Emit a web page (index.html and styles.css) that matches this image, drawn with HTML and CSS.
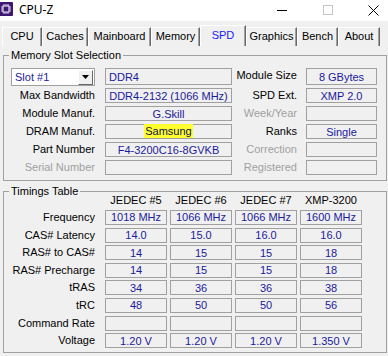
FILE: index.html
```html
<!DOCTYPE html>
<html lang="en">
<head>
    <meta charset="UTF-8">
    <meta name="viewport" content="width=device-width, initial-scale=1.0">
    <title>CPU-Z</title>
    <link rel="stylesheet" href="styles.css">
</head>
<body>
    <div class="titlebar">
        <svg class="app-icon" viewBox="0 0 14 14">
            <rect x="0" y="0" width="14" height="14" rx="1" fill="#3d1673"/>
            <rect x="4" y="4" width="6" height="6" fill="none" stroke="#fff" stroke-width="1"/>
            <path d="M5 2v2M7 2v2M9 2v2M5 10v2M7 10v2M9 10v2M2 5h2M2 7h2M2 9h2M10 5h2M10 7h2M10 9h2" stroke="#d8c8f0" stroke-width="1"/>
        </svg>
        <span class="title">CPU-Z</span>
        <div class="controls">
            <div class="ctl">
                <svg width="10" height="10" viewBox="0 0 10 10"><path d="M0 5.5h10" stroke="#000" stroke-width="1"/></svg>
            </div>
            <div class="ctl">
                <svg width="10" height="10" viewBox="0 0 10 10"><rect x="0.5" y="0.5" width="9" height="9" fill="none" stroke="#c4c4c4" stroke-width="1"/></svg>
            </div>
            <div class="ctl">
                <svg width="11" height="11" viewBox="0 0 11 11"><path d="M0.5 0.5l10 10M10.5 0.5l-10 10" stroke="#000" stroke-width="1"/></svg>
            </div>
        </div>
    </div>

    <div class="tabs">
        <div class="tab">CPU</div>
        <div class="tab">Caches</div>
        <div class="tab">Mainboard</div>
        <div class="tab">Memory</div>
        <div class="tab active">SPD</div>
        <div class="tab">Graphics</div>
        <div class="tab">Bench</div>
        <div class="tab">About</div>
    </div>

    <div class="panel">
        <fieldset class="group slot-group">
            <legend>Memory Slot Selection</legend>
            <div class="slot-grid">
                <div class="dropdown">
                    <span>Slot #1</span>
                    <span class="drop-btn">
                        <svg width="7" height="4" viewBox="0 0 7 4"><path d="M0 0h7L3.5 4z" fill="#000"/></svg>
                    </span>
                </div>
                <div class="box left">DDR4</div>
                <div class="label right">Module Size</div>
                <div class="box">8 GBytes</div>

                <div class="label">Max Bandwidth</div>
                <div class="box">DDR4-2132 (1066 MHz)</div>
                <div class="label right">SPD Ext.</div>
                <div class="box">XMP 2.0</div>

                <div class="label">Module Manuf.</div>
                <div class="box">G.Skill</div>
                <div class="label right off">Week/Year</div>
                <div class="box"></div>

                <div class="label">DRAM Manuf.</div>
                <div class="box"><span class="mark">Samsung</span></div>
                <div class="label right">Ranks</div>
                <div class="box">Single</div>

                <div class="label">Part Number</div>
                <div class="box">F4-3200C16-8GVKB</div>
                <div class="label right off">Correction</div>
                <div class="box"></div>

                <div class="label off">Serial Number</div>
                <div class="box"></div>
                <div class="label right off">Registered</div>
                <div class="box"></div>
            </div>
        </fieldset>

        <fieldset class="group timing-group">
            <legend>Timings Table</legend>
            <div class="timing-grid" id="timingGrid"></div>
        </fieldset>
    </div>

    <script>
        const headers = ['JEDEC #5', 'JEDEC #6', 'JEDEC #7', 'XMP-3200'];
        const rows = [
            ['Frequency', '1018 MHz', '1066 MHz', '1066 MHz', '1600 MHz'],
            ['CAS# Latency', '14.0', '15.0', '16.0', '16.0'],
            ['RAS# to CAS#', '14', '15', '15', '18'],
            ['RAS# Precharge', '14', '15', '15', '18'],
            ['tRAS', '34', '36', '36', '38'],
            ['tRC', '48', '50', '50', '56'],
            ['Command Rate', '', '', '', ''],
            ['Voltage', '1.20 V', '1.20 V', '1.20 V', '1.350 V']
        ];

        const grid = document.getElementById('timingGrid');

        function addCell(text, cls) {
            const cell = document.createElement('div');
            cell.className = cls;
            cell.textContent = text;
            grid.appendChild(cell);
        }

        addCell('', 'th');
        headers.forEach(h => addCell(h, 'th'));

        rows.forEach(row => {
            addCell(row[0], 'label');
            row.slice(1).forEach(v => addCell(v, 'box'));
        });
    </script>
</body>
</html>
```

FILE: styles.css
```css
* {
    box-sizing: border-box;
}

body {
    margin: 0;
    width: 388px;
    height: 356px;
    overflow: hidden;
    background-color: #f0f0f0;
    font-family: 'Liberation Sans', Arial, sans-serif;
    font-size: 11px;
    color: #000;
}

.titlebar {
    display: flex;
    align-items: flex-start;
    height: 21px;
    background-color: #fff;
}

.app-icon {
    width: 14px;
    height: 14px;
    margin: 2px 0 0 -1px;
}

.title {
    margin-left: 6px;
    font-family: 'Noto Sans', sans-serif;
    font-size: 12px;
    line-height: 19px;
}

.controls {
    display: flex;
    margin-left: auto;
    margin-right: -8.5px;
}

.ctl {
    width: 46px;
    height: 20px;
    display: flex;
    align-items: center;
    justify-content: center;
}

.tabs {
    display: grid;
    grid-template-columns: 40px 46px 63px 49px 46px 51px 41px 42px;
    align-items: end;
    height: 25px;
    padding-left: 2px;
}

.tab {
    height: 19px;
    line-height: 17px;
    text-align: center;
    white-space: nowrap;
    border-top: 1px solid #fff;
    border-left: 1px solid #fff;
    border-right: 1px solid #696969;
    box-shadow: inset -1px 0 #a0a0a0;
}

.tab.active {
    height: 21px;
    line-height: 18px;
    color: #1a1aff;
}

.group {
    width: 384px;
    margin: 3px 0 0 3px;
    padding: 6px 0 5px 7px;
    border: 1px solid #a0a0a0;
    min-width: 0;
}

.group legend {
    margin-left: -2px;
    padding: 0 2px;
    line-height: 13px;
}

.timing-group {
    margin-top: 4px;
    padding-top: 0;
    padding-bottom: 4px;
}

.slot-grid {
    display: grid;
    grid-template-columns: 94px 127px 74px 71px;
    grid-template-rows: 17px repeat(5, 15px);
    row-gap: 3px;
}

.label {
    text-align: right;
    padding-right: 10px;
    line-height: 15px;
    white-space: nowrap;
}

.label.right {
    padding-right: 9px;
}

.off {
    color: #a0a0a0;
}

.box {
    display: flex;
    align-items: center;
    justify-content: center;
    border: 1px solid #a0a0a0;
    color: #1a1a9c;
    white-space: nowrap;
}

.box.left {
    justify-content: flex-start;
    padding-left: 3px;
}

.mark {
    align-self: stretch;
    display: flex;
    align-items: center;
    padding: 0 1px;
    margin-top: -1px;
    background-color: #ffff30;
    color: #10104a;
}

.dropdown {
    width: 84px;
    height: 18px;
    display: flex;
    align-items: center;
    justify-content: space-between;
    padding: 1px 1px 1px 3px;
    background-color: #fff;
    border: 1px solid #a0a0a0;
    color: #1a1a9c;
}

.drop-btn {
    width: 15px;
    height: 15px;
    display: flex;
    align-items: center;
    justify-content: center;
    background-color: #f0f0f0;
    border: 1px solid;
    border-color: #fff #696969 #696969 #fff;
}

.timing-grid {
    display: grid;
    grid-template-columns: 91px repeat(4, 62px);
    grid-template-rows: 14.4px repeat(8, 15px);
    column-gap: 3px;
    row-gap: 2.6px;
    margin-top: -5px;
}

.timing-grid .label {
    padding-right: 7px;
}

.th {
    text-align: center;
    line-height: 14px;
    white-space: nowrap;
}
```
